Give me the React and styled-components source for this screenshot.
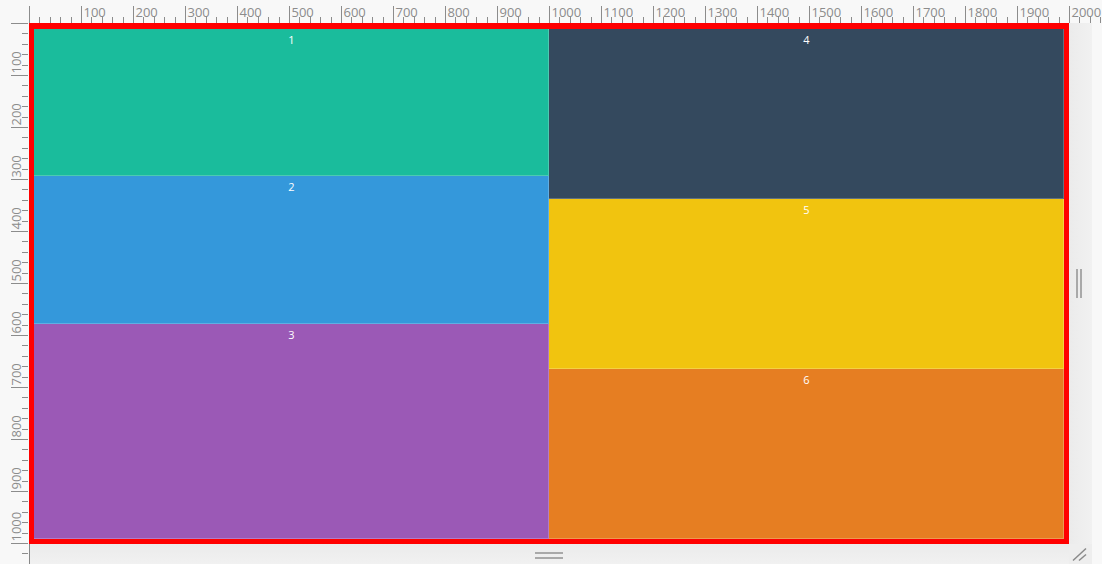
import React from "react";
import styled, { createGlobalStyle } from "styled-components";

const Global = createGlobalStyle`
  html, body { margin: 0; padding: 0; background: #f8f8f8; }
  body { font-family: "Open Sans", "Noto Sans", sans-serif; overflow: hidden; }
`;

const Page = styled.div`
  display: grid;
  grid-template-columns: 29px 1073px;
  grid-template-rows: 23px 541px;
  width: 1102px;
  height: 564px;
  overflow: hidden;
`;

const Corner = styled.div``;

const RulerBox = styled.div`
  overflow: hidden;
  svg { display: block; }
`;

const Workspace = styled.div`
  display: grid;
  grid-template-columns: 1040px 23px;
  grid-template-rows: 521px 20px;
`;

const Frame = styled.div`
  box-sizing: border-box;
  border: solid #ff0000;
  border-width: 6px 5px 5px 5px;
  display: flex;
  background: #ddd;
`;

const Column = styled.div`
  flex: 1 1 0;
  display: flex;
  flex-direction: column;
  min-width: 0;
`;

const Panel = styled.div`
  flex: ${(p) => p.$grow} 1 0;
  min-height: 0;
  background: ${(p) => p.$bg};
  color: #fff;
  font-size: 11px;
  text-align: center;
  padding-top: 3px;
  box-sizing: border-box;
  box-shadow: inset -1px -1px 0 rgba(255, 255, 255, 0.22);
`;

const SideStrip = styled.div`
  background: linear-gradient(to right, #ebebeb, #f1f1f1);
  display: flex;
  align-items: center;
  padding-left: 7px;
  gap: 2px;
`;

const VBar = styled.div`
  width: 2px;
  height: 29px;
  background: #a9a9a9;
`;

const BottomStrip = styled.div`
  background: linear-gradient(to bottom, #ebebeb, #f1f1f1);
  display: flex;
  flex-direction: column;
  align-items: center;
  padding-top: 8px;
  gap: 3px;
  box-shadow: inset 1px 0 0 #888;
`;

const HBar = styled.div`
  width: 28px;
  height: 2px;
  background: #a9a9a9;
`;

const Grip = styled.div`
  background: #eeeeee;
  svg { display: block; }
`;

const STEP = 10.4;

function TopRuler() {
  const ticks = [];
  for (let i = 0; i * STEP < 1073; i++) {
    const x = Math.round(i * STEP) + 0.5;
    const long = i % 5 === 0;
    ticks.push(
      <line key={"t" + i} x1={x} x2={x} y1={long ? 6 : 17} y2={23} stroke="#8c8c8c" strokeWidth="1" />
    );
    if (long && i > 0) {
      ticks.push(
        <text key={"l" + i} x={x + 2} y={16.5} fontSize="13" fill="#8c8c8c" fontFamily="Open Sans, sans-serif">
          {i * 20}
        </text>
      );
    }
  }
  return (
    <RulerBox>
      <svg width="1073" height="23">{ticks}</svg>
    </RulerBox>
  );
}

function LeftRuler() {
  const ticks = [];
  for (let i = 0; i * STEP < 541; i++) {
    const y = Math.round(i * STEP) + 0.5;
    const long = i % 5 === 0;
    ticks.push(
      <line key={"t" + i} y1={y} y2={y} x1={long ? 11 : 22} x2={28} stroke="#8c8c8c" strokeWidth="1" />
    );
    if (long && i > 0) {
      ticks.push(
        <text
          key={"l" + i}
          transform={`translate(20.5 ${y - 2}) rotate(-90)`}
          fontSize="13"
          fill="#8c8c8c"
          fontFamily="Open Sans, sans-serif"
        >
          {i * 20}
        </text>
      );
    }
  }
  return (
    <RulerBox>
      <svg width="29" height="541">{ticks}</svg>
    </RulerBox>
  );
}

const left = [
  { n: 1, bg: "#1abc9c", g: 147 },
  { n: 2, bg: "#3498db", g: 147 },
  { n: 3, bg: "#9b59b6", g: 216 },
];
const right = [
  { n: 4, bg: "#34495e", g: 1 },
  { n: 5, bg: "#f1c40f", g: 1 },
  { n: 6, bg: "#e67e22", g: 1 },
];

export default function App() {
  return (
    <>
      <Global />
      <Page>
        <Corner />
        <TopRuler />
        <LeftRuler />
        <Workspace>
          <Frame>
            <Column>
              {left.map((p) => (
                <Panel key={p.n} $bg={p.bg} $grow={p.g}>{p.n}</Panel>
              ))}
            </Column>
            <Column>
              {right.map((p) => (
                <Panel key={p.n} $bg={p.bg} $grow={p.g}>{p.n}</Panel>
              ))}
            </Column>
          </Frame>
          <SideStrip>
            <VBar />
            <VBar />
          </SideStrip>
          <BottomStrip>
            <HBar />
            <HBar />
          </BottomStrip>
          <Grip>
            <svg width="23" height="20">
              <line x1="4" y1="16.5" x2="17" y2="4.5" stroke="#8a8a8a" strokeWidth="1.5" />
              <line x1="10" y1="16.5" x2="17" y2="10.5" stroke="#8a8a8a" strokeWidth="1.5" />
            </svg>
          </Grip>
        </Workspace>
      </Page>
    </>
  );
}
